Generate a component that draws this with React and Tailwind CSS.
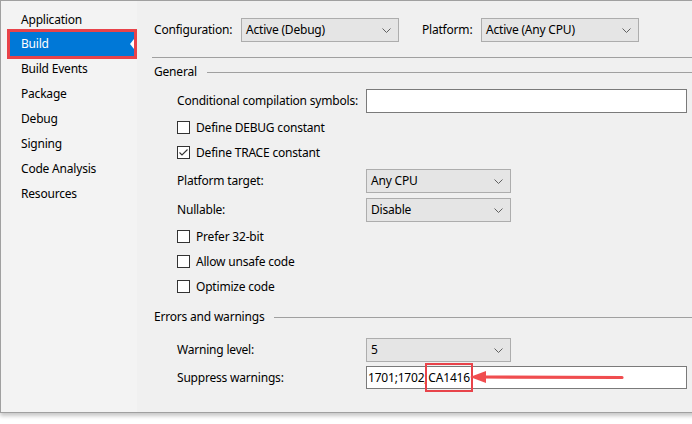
import React from 'react';

const tabs = ['Application', 'Build', 'Build Events', 'Package', 'Debug', 'Signing', 'Code Analysis', 'Resources'];

function Chevron() {
  return (
    <svg width="9" height="5" viewBox="0 0 9 5" className="shrink-0">
      <polyline points="0.5,0.5 4.5,4.5 8.5,0.5" fill="none" stroke="#606060" strokeWidth="1" />
    </svg>
  );
}

function Dropdown({ value, className = '' }) {
  return (
    <div className={`flex h-[24px] items-center justify-between border border-[#adadad] bg-[#e5e5e5] pl-[4px] pr-[7px] ${className}`}>
      <span>{value}</span>
      <Chevron />
    </div>
  );
}

function Check({ label, checked = false, className = '' }) {
  return (
    <div className={`flex h-[13px] items-center gap-[6px] pl-[40px] ${className}`}>
      <div className="flex h-[13px] w-[13px] items-center justify-center border border-[#333333] bg-white">
        {checked && (
          <svg width="11" height="11" viewBox="0 0 11 11">
            <polyline points="1.5,5.5 4,8 9.5,2.5" fill="none" stroke="#333333" strokeWidth="1.1" />
          </svg>
        )}
      </div>
      <span>{label}</span>
    </div>
  );
}

function GroupHeader({ title, className = '' }) {
  return (
    <div className={`flex items-center gap-[10px] pl-[17px] ${className}`}>
      <span>{title}</span>
      <div className="h-px flex-1 bg-[#a0a0a0]" />
    </div>
  );
}

export default function App() {
  return (
    <div className="h-[424px] w-[692px] overflow-hidden bg-white text-[12px] leading-none tracking-[-0.2px] text-black" style={{ fontFamily: '"Noto Sans", "Liberation Sans", sans-serif' }}>
      <div className="flex h-[413px] w-[700px] border-l border-t border-b border-[#a0a0a0] shadow-[0_3px_4px_rgba(0,0,0,0.22)]">
        {/* tabs */}
        <div className="w-[136px] shrink-0 bg-[#f3f3f3] pt-[6px]">
          {tabs.map(t =>
            t === 'Build' ? (
              <div key={t} className="ml-[6px] flex h-[30px] -my-[3px] items-stretch border-[3px] border-[#e8434a]">
                <div className="flex flex-1 items-center bg-[#0078d7] pl-[11px] text-white">{t}</div>
                <svg width="4" height="24" viewBox="0 0 4 24" className="shrink-0">
                  <rect width="4" height="24" fill="#0078d7" />
                  <polygon points="4,7 0,12 4,17" fill="#ffffff" />
                </svg>
              </div>
            ) : (
              <div key={t} className="flex h-[25px] items-center pl-[20px]">{t}</div>
            )
          )}
        </div>

        {/* page */}
        <div className="flex-1 bg-[#f0f0f0] pt-[17px]">
          <div className="flex h-[24px] items-center pl-[17px]">
            <span className="w-[87px]">Configuration:</span>
            <Dropdown value="Active (Debug)" className="w-[158px]" />
            <span className="ml-[23px] w-[59px]">Platform:</span>
            <Dropdown value="Active (Any CPU)" className="w-[158px]" />
          </div>
          <div className="ml-[15px] mt-[15px] h-px bg-[#a0a0a0]" />

          <GroupHeader title="General" className="mt-[8px] h-[12px]" />

          <div className="mt-[11px] flex h-[24px] items-center pl-[40px]">
            <span className="w-[189px]">Conditional compilation symbols:</span>
            <div className="h-[24px] w-[321px] border border-[#7a7a7a] bg-white" />
          </div>

          <Check label="Define DEBUG constant" className="mt-[8px]" />
          <Check label="Define TRACE constant" checked className="mt-[12px]" />

          <div className="mt-[10px] flex h-[24px] items-center pl-[40px]">
            <span className="w-[189px]">Platform target:</span>
            <Dropdown value="Any CPU" className="w-[145px]" />
          </div>
          <div className="mt-[5px] flex h-[24px] items-center pl-[40px]">
            <span className="w-[189px]">Nullable:</span>
            <Dropdown value="Disable" className="w-[145px]" />
          </div>

          <Check label="Prefer 32-bit" className="mt-[8px]" />
          <Check label="Allow unsafe code" className="mt-[12px]" />
          <Check label="Optimize code" className="mt-[12px]" />

          <GroupHeader title="Errors and warnings" className="mt-[18px] h-[12px]" />

          <div className="mt-[15px] flex h-[24px] items-center pl-[40px]">
            <span className="w-[189px]">Warning level:</span>
            <Dropdown value="5" className="w-[145px]" />
          </div>
          <div className="mt-[4px] flex h-[23px] items-center pl-[40px]">
            <span className="w-[189px]">Suppress warnings:</span>
            <div className="relative flex h-[23px] w-[321px] items-center border border-[#7a7a7a] bg-white pl-[1px]">
              <span>1701;1702;</span>
              <span className="-my-[2px] flex h-[25px] items-center px-[1px] outline outline-2 outline-[#e8434a]">CA1416</span>
              <svg width="156" height="16" viewBox="0 0 156 16" className="absolute left-[103px] top-[2px]">
                <line x1="12" y1="8" x2="152" y2="8.5" stroke="#f04d4f" strokeWidth="3.2" strokeLinecap="round" />
                <polygon points="0,8 16,2 16,14" fill="#f04d4f" />
              </svg>
            </div>
          </div>
        </div>
      </div>
    </div>
  );
}
